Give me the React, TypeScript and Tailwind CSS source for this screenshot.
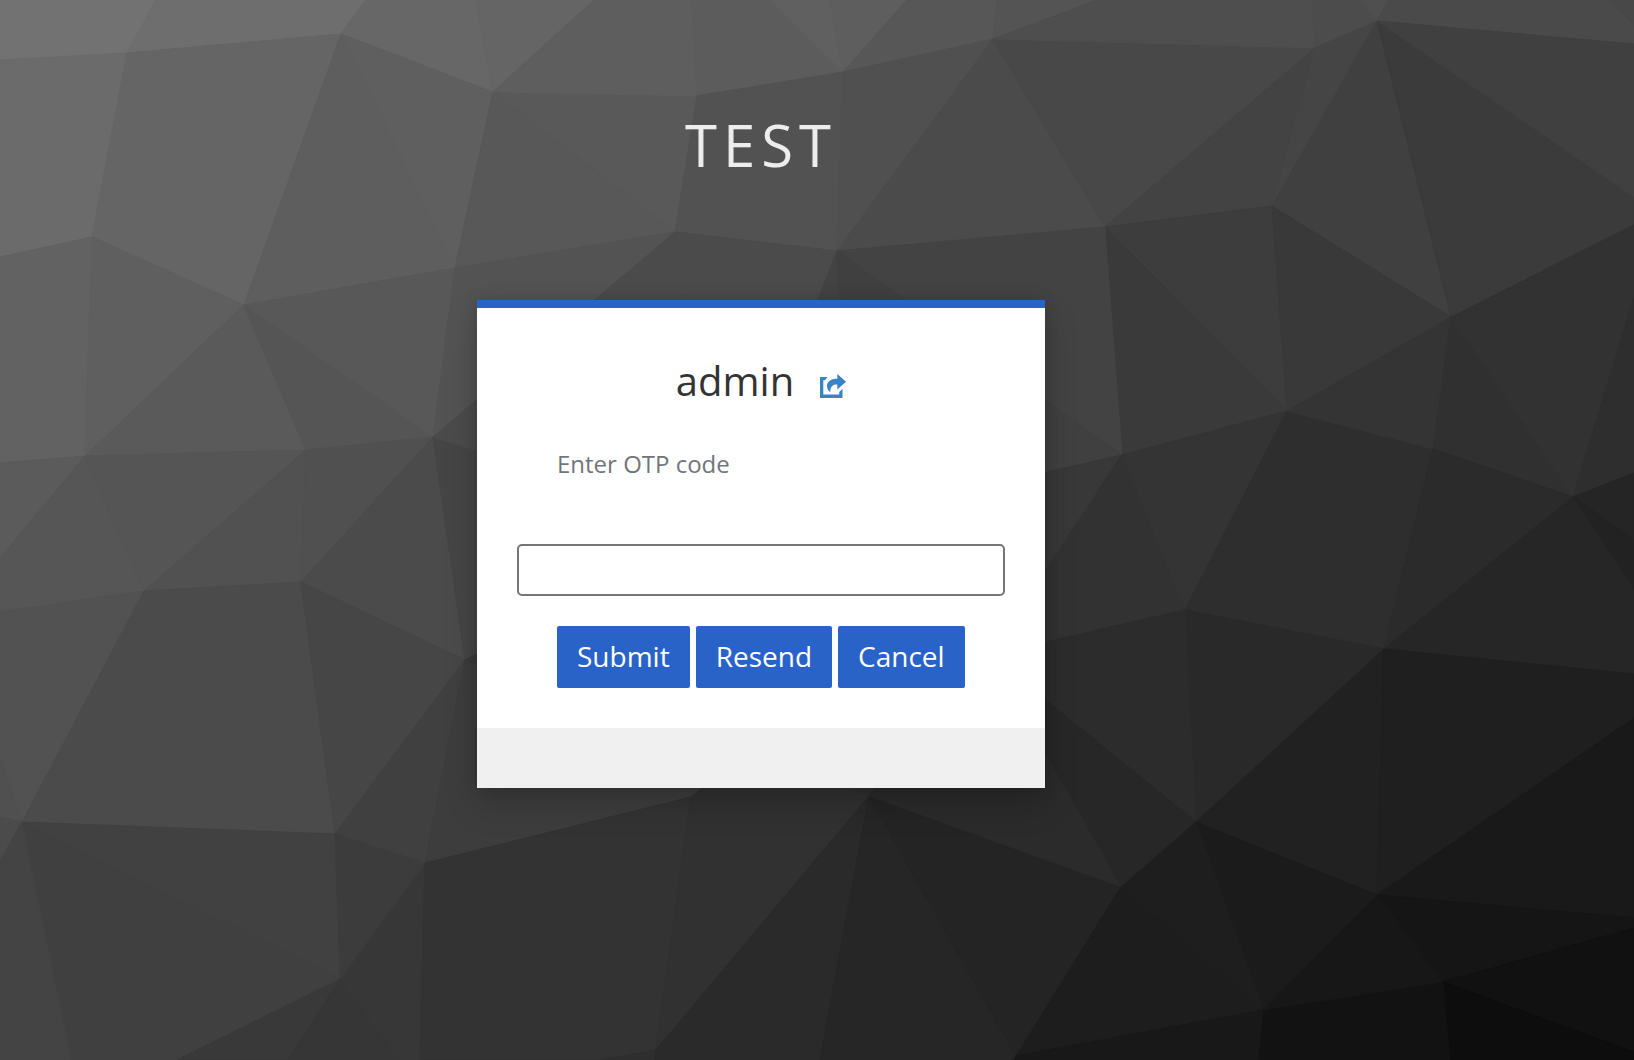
type Facet = [fill: string, points: string];

const facets: Facet[] = [
  ["#727272", "0,0 156,0 127,53 0,60"],
  ["#6e6e6e", "156,0 366,0 341,34 127,53"],
  ["#676767", "366,0 476,0 493,92 341,34"],
  ["#656565", "476,0 594,0 493,92"],
  ["#6b6b6b", "0,60 127,53 92,237 0,257"],
  ["#656565", "127,53 341,34 244,305 92,237"],
  ["#5e5e5e", "341,34 455,268 244,305"],
  ["#5f5f5f", "341,34 493,92 455,268"],
  ["#626262", "0,257 92,237 85,456 0,463"],
  ["#5f5f5f", "92,237 244,305 85,456"],
  ["#5a5a5a", "244,305 306,450 85,456"],
  ["#555555", "244,305 433,437 306,450"],
  ["#585858", "244,305 455,268 433,437"],
  ["#585858", "493,92 675,232 455,268"],
  ["#535353", "455,268 675,232 433,437"],
  ["#595959", "493,92 697,96 675,232"],
  ["#5e5e5e", "594,0 692,0 697,96 493,92"],
  ["#5b5b5b", "0,463 85,456 0,558"],
  ["#565656", "85,456 144,591 0,612 0,558"],
  ["#555555", "85,456 306,450 144,591"],
  ["#515151", "306,450 301,582 144,591"],
  ["#505050", "306,450 433,437 301,582"],
  ["#4b4b4b", "433,437 465,660 301,582"],
  ["#454545", "433,437 728,530 465,660"],
  ["#4b4b4b", "433,437 675,232 728,530"],
  ["#525252", "0,612 144,591 22,822 0,757"],
  ["#505050", "0,757 22,822 0,817"],
  ["#4b4b4b", "0,817 22,822 0,861"],
  ["#4b4b4b", "144,591 301,582 335,834 22,822"],
  ["#464646", "301,582 465,660 335,834"],
  ["#404040", "335,834 465,660 425,863"],
  ["#414141", "22,822 335,834 340,979"],
  ["#404040", "22,822 340,979 177,1060 71,1060"],
  ["#444444", "0,861 22,822 71,1060 0,1060"],
  ["#393939", "340,979 288,1060 177,1060"],
  ["#363636", "340,979 398,1060 288,1060"],
  ["#373737", "340,979 425,863 420,1060 398,1060"],
  ["#3c3c3c", "335,834 425,863 340,979"],
  ["#3d3d3d", "465,660 760,742 691,797 425,863"],
  ["#3a3a3a", "465,660 728,530 760,742"],
  ["#333333", "425,863 691,797 656,1050 600,1060 420,1060"],
  ["#2e2e2e", "600,1060 656,1050 655,1060"],
  ["#313131", "691,797 760,742 869,796 656,1050"],
  ["#2a2a2a", "869,796 820,1060 655,1060 656,1050"],
  ["#262626", "869,796 1016,1056 1013,1060 820,1060"],
  ["#242424", "869,796 1121,887 1016,1056"],
  ["#303030", "760,742 728,530 853,516 990,655 869,796"],
  ["#5c5c5c", "692,0 771,0 843,72 697,96"],
  ["#606060", "771,0 830,0 843,72"],
  ["#5e5e5e", "830,0 907,0 843,72"],
  ["#575757", "907,0 997,0 993,39 843,72"],
  ["#545454", "997,0 1097,0 993,39"],
  ["#525252", "697,96 843,72 837,251 675,232"],
  ["#505050", "843,72 993,39 837,251"],
  ["#4b4b4b", "993,39 1105,227 837,251"],
  ["#484848", "993,39 1315,48 1105,227"],
  ["#4e4e4e", "1097,0 1312,0 1315,48 993,39"],
  ["#4c4c4c", "1312,0 1361,0 1377,21 1315,48"],
  ["#4f4f4f", "1361,0 1389,0 1377,21"],
  ["#4a4a4a", "1389,0 1610,0 1634,25 1634,44 1377,21"],
  ["#484848", "1610,0 1634,0 1634,25"],
  ["#434343", "1315,48 1272,206 1105,227"],
  ["#454545", "1315,48 1377,21 1272,206"],
  ["#404040", "1377,21 1451,317 1272,206"],
  ["#3b3b3b", "1377,21 1634,197 1634,225 1451,317"],
  ["#404040", "1377,21 1634,44 1634,197"],
  ["#3d3d3d", "1105,227 1272,206 1287,411"],
  ["#393939", "1272,206 1451,317 1287,411"],
  ["#3a3a3a", "1105,227 1287,411 1122,455"],
  ["#434343", "837,251 1105,227 1122,455"],
  ["#4b4b4b", "675,232 837,251 728,530"],
  ["#434343", "837,251 853,516 728,530"],
  ["#404040", "837,251 1122,455 853,516"],
  ["#383838", "1122,455 990,655 853,516"],
  ["#323232", "1122,455 1185,610 990,655"],
  ["#343434", "1122,455 1287,411 1185,610"],
  ["#2e2e2e", "1287,411 1433,449 1384,649 1185,610"],
  ["#343434", "1287,411 1451,317 1433,449"],
  ["#303030", "1451,317 1573,497 1433,449"],
  ["#323232", "1451,317 1634,225 1634,298 1573,497"],
  ["#2e2e2e", "1634,298 1634,473 1573,497"],
  ["#2b2b2b", "1433,449 1573,497 1384,649"],
  ["#252525", "1573,497 1634,473 1634,540"],
  ["#222222", "1573,497 1634,540 1634,590"],
  ["#262626", "1573,497 1634,590 1634,674 1384,649"],
  ["#292929", "1185,610 1384,649 1196,822"],
  ["#2c2c2c", "1185,610 1196,822 990,655"],
  ["#272727", "990,655 1196,822 1121,887"],
  ["#2b2b2b", "990,655 1121,887 869,796"],
  ["#212121", "1384,649 1377,895 1196,822"],
  ["#1f1f1f", "1384,649 1634,674 1634,718 1377,895"],
  ["#191919", "1634,718 1634,918 1377,895"],
  ["#151515", "1377,895 1634,918 1634,928 1443,982"],
  ["#111111", "1443,982 1634,928 1634,1052"],
  ["#0d0d0d", "1443,982 1634,1052 1634,1060 1450,1060"],
  ["#121212", "1263,1010 1443,982 1450,1060 1258,1060"],
  ["#171717", "1377,895 1443,982 1263,1010"],
  ["#1b1b1b", "1196,822 1377,895 1263,1010"],
  ["#1e1e1e", "1196,822 1263,1010 1121,887"],
  ["#1d1d1d", "1121,887 1263,1010 1016,1056"],
  ["#181818", "1263,1010 1258,1060 1013,1060 1016,1056"],
];

function Backdrop() {
  return (
    <svg
      aria-hidden="true"
      className="absolute inset-0 h-full w-full"
      viewBox="0 0 1634 1060"
      preserveAspectRatio="xMidYMid slice"
    >
      {facets.map(([fill, points]) => (
        <polygon key={points} points={points} fill={fill} stroke={fill} strokeWidth="1" strokeLinejoin="round" />
      ))}
    </svg>
  );
}

function RestartIcon() {
  return (
    <svg aria-hidden="true" viewBox="0 0 26 24" className="h-6 w-[26px]" fill="currentColor">
      <path d="M0 3H7.500L5 6.200H3.300V20.500H19.200V18L22.500 14.800V24H0Z" />
      <path d="M17.300 0L26 7.800L17.300 15.600V10.400C13.500 10.200 10.500 11.500 10.300 18C8 16.500 7 14.500 7 12C7 7.500 11 4.800 17.300 4.800Z" />
    </svg>
  );
}

const buttonClass =
  "h-[62px] rounded-xs bg-[#2963c8] px-5 pb-0.5 text-[28px] leading-9 text-white hover:bg-[#1f56b5]";

export default function App() {
  return (
    <div className="relative flex min-h-screen flex-col items-center overflow-hidden bg-[#333333] pr-28 font-['Open_Sans','Noto_Sans',sans-serif]">
      <Backdrop />
      <header className="relative pt-[110px] pb-[120px]">
        <h1 className="text-[58px] leading-[70px] tracking-[6px] text-[#ededed] uppercase">Test</h1>
      </header>
      <main className="relative w-full max-w-[568px] border-t-8 border-[#2963c8] bg-white shadow-[0_16px_32px_rgba(3,3,3,0.18),0_0_14px_rgba(3,3,3,0.12)]">
        <form className="px-10 pb-10" onSubmit={(e) => e.preventDefault()}>
          <div className="flex items-center justify-center gap-[26px] pt-[47px]">
            <span className="text-[40px] leading-[52px] text-[#333333]">admin</span>
            <a href="#restart" aria-label="Restart login" className="pt-2.5 text-[#3984c8]">
              <RestartIcon />
            </a>
          </div>
          <label htmlFor="otp" className="mt-[39px] block px-10 text-2xl leading-9 text-[#72767b]">
            Enter OTP code
          </label>
          <input
            id="otp"
            type="text"
            autoComplete="off"
            className="mt-[62px] block h-[52px] w-full rounded-[5px] border-2 border-[#767676] bg-white px-3 text-2xl text-[#333333] outline-none"
          />
          <div className="mt-[30px] flex gap-1.5 px-10">
            <button type="submit" className={buttonClass}>Submit</button>
            <button type="button" className={buttonClass}>Resend</button>
            <button type="button" className={buttonClass}>Cancel</button>
          </div>
        </form>
        <div className="h-[60px] bg-[#f0f0f0]" />
      </main>
    </div>
  );
}
